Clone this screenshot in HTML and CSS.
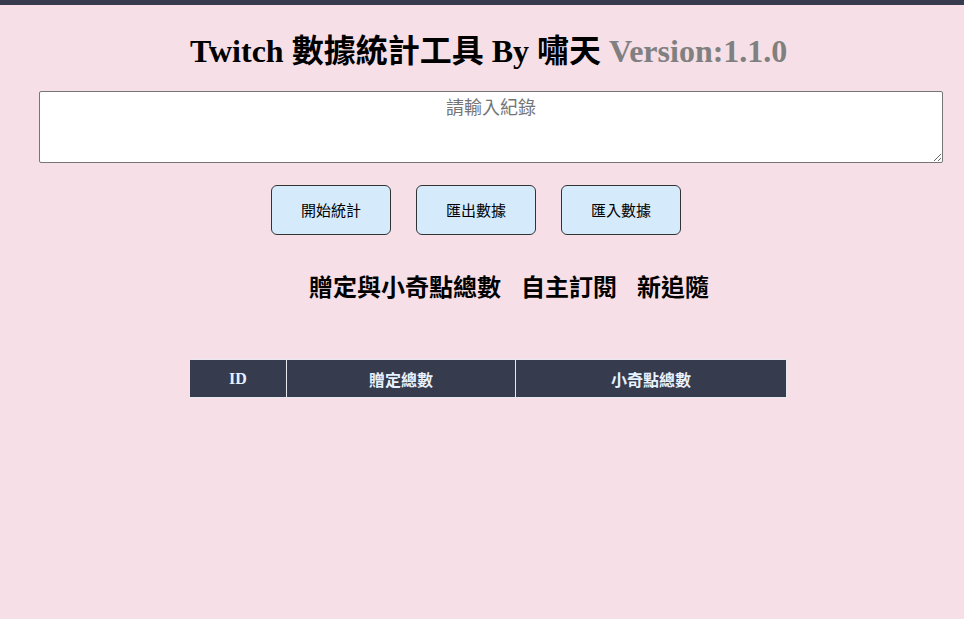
FILE: index.html
```html
<!DOCTYPE html>
<html lang="zh-Hant">
<head>
<meta charset="utf-8">
<title>Twitch 數據統計工具</title>
<link rel="stylesheet" href="styles.css">
</head>
<body>
<div class="topbar"></div>
<h1 class="title">Twitch 數據統計工具 By 嘯天 <span class="version">Version:1.1.0</span></h1>
<div class="input-wrap">
  <textarea class="log-input" placeholder="請輸入紀錄"></textarea>
</div>
<div class="actions">
  <button class="btn">開始統計</button>
  <button class="btn">匯出數據</button>
  <button class="btn">匯入數據</button>
</div>
<div class="tabs">
  <span class="tab">贈定與小奇點總數</span>
  <span class="tab">自主訂閱</span>
  <span class="tab">新追隨</span>
</div>
<div class="table-wrap">
  <table class="stats">
    <thead>
      <tr>
        <th class="col-id">ID</th>
        <th class="col-gift">贈定總數</th>
        <th class="col-bits">小奇點總數</th>
      </tr>
    </thead>
  </table>
</div>
</body>
</html>
```
FILE: styles.css
```css
html, body {
  margin: 0;
  padding: 0;
  background: #f6dfe6;
  height: 100%;
}
body {
  font-family: "Liberation Sans", "Noto Sans CJK TC", sans-serif;
}
.topbar {
  height: 5px;
  background: #363b4e;
}
.title {
  margin: 28px 0 0 0;
  padding-left: 190px;
  font-family: "Liberation Serif", "Noto Sans CJK TC", serif;
  font-size: 32px;
  font-weight: bold;
  line-height: 37px;
  color: #000;
  white-space: nowrap;
}
.version {
  color: #808080;
}
.input-wrap {
  margin-top: 21px;
  padding-left: 39px;
}
.log-input {
  display: block;
  box-sizing: border-box;
  width: 904px;
  height: 72px;
  margin: 0;
  border: 1px solid #767676;
  border-radius: 2px;
  background: #fff;
  font-family: "Liberation Sans", "Noto Sans CJK TC", sans-serif;
  font-size: 18px;
  text-align: center;
  padding: 1px 2px;
}
.log-input::placeholder {
  color: #757575;
}
.actions {
  display: flex;
  gap: 25px;
  margin-top: 22px;
  padding-left: 271px;
}
.btn {
  box-sizing: border-box;
  width: 120px;
  height: 50px;
  border: 1px solid #333;
  border-radius: 6px;
  background: #d5ebfc;
  font-family: "Liberation Sans", "Noto Sans CJK TC", sans-serif;
  font-size: 15px;
  color: #000;
  padding: 0 0 2px 0;
}
.tabs {
  display: flex;
  gap: 20px;
  margin-top: 38px;
  padding-left: 309px;
  font-size: 24px;
  font-weight: bold;
  line-height: 30px;
}
.table-wrap {
  margin-top: 56px;
  padding-left: 189px;
}
.stats {
  border-collapse: collapse;
  width: 596px;
  table-layout: fixed;
}
.stats th {
  height: 37px;
  padding: 0;
  background: #363b4e;
  color: #e6f2ff;
  border: 1px solid #e8e8ee;
  font-family: "Liberation Serif", "Noto Sans CJK TC", serif;
  font-size: 16px;
  font-weight: bold;
  text-align: center;
}
.col-id { width: 96px; }
.col-gift { width: 228px; }
.col-bits { width: 270px; }
```
